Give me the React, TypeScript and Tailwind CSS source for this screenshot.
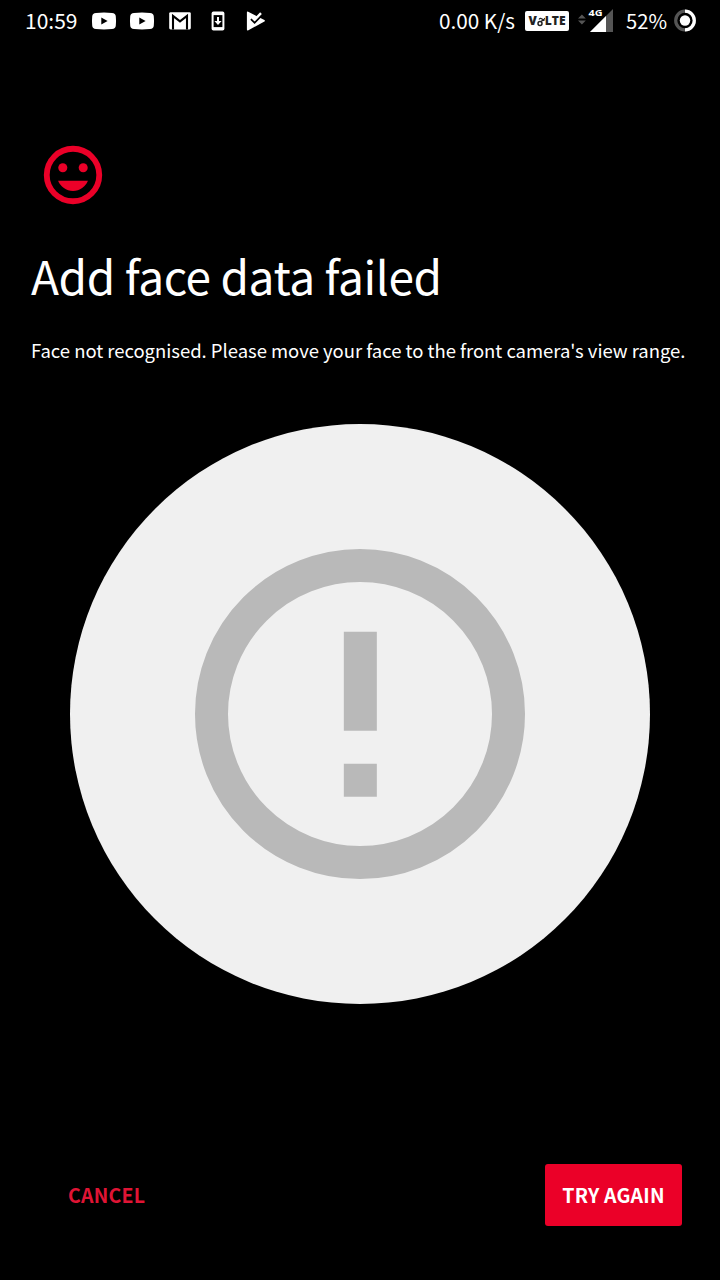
const YoutubeIcon = () => (
  <svg className="h-5 w-6.5" viewBox="0 0 26 20" fill="white">
    <path
      fillRule="evenodd"
      d="M5 2Q13 1.2 21 2Q24.6 2.2 24.8 5.5Q25.3 10 24.8 14.5Q24.6 17.8 21 18Q13 18.8 5 18Q1.4 17.8 1.2 14.5Q.7 10 1.2 5.5Q1.4 2.2 5 2ZM10.3 6.4V13.6L16.6 10Z"
    />
  </svg>
);

const GmailIcon = () => (
  <svg className="h-5 w-6" viewBox="0 0 24 20">
    <rect x="1.2" y="1.2" width="21.6" height="17.3" rx="1.4" fill="white" />
    <path d="M5 18.5V4.8L12 10.3L19 4.8V18.5" fill="none" stroke="black" strokeWidth="2.1" />
  </svg>
);

const UpdateIcon = () => (
  <svg className="h-5 w-4" viewBox="0 0 16 20">
    <rect x="1.6" y=".6" width="12.8" height="19" rx="1.8" fill="white" />
    <rect x="3.6" y="4.1" width="8.8" height="12" fill="black" />
    <path d="M7 6.1H9V10H11.6L8 14L4.4 10H7Z" fill="white" />
  </svg>
);

const PlayCheckIcon = () => (
  <svg className="h-5 w-5" viewBox="0 0 20 20">
    <path d="M.9 1.6Q.9 .1 2.2 .8L18.4 9Q19.5 9.8 18.4 10.6L2.4 19.2Q.9 19.8 .9 18.4Z" fill="white" />
    <path d="M5 8L8.6 11.6L17.4 2.6" fill="none" stroke="black" strokeWidth="2" />
    <path d="M6.2 6.4L8.6 8.8L15 2.2" fill="none" stroke="white" strokeWidth="2.4" />
  </svg>
);

const VolteBadge = () => (
  <div className="flex h-5 w-11 items-center justify-center rounded-[2px] bg-white font-['Open_Sans',sans-serif] text-[12px] leading-none font-extrabold text-[#222]">
    <span>V</span>
    <svg className="h-3 w-2" viewBox="0 0 8 12" fill="none" stroke="#222">
      <circle cx="3" cy="8.5" r="2" strokeWidth="1.5" />
      <path d="M2 4.5Q3 2.5 5 4T8 3M4 6.5Q5.5 5 7.5 5.5" strokeWidth="1.1" />
    </svg>
    <span>LTE</span>
  </div>
);

const SignalIcon = () => (
  <svg className="h-8 w-9" viewBox="0 -4 36 32">
    <path d="M0 9.6L3.9 5.6L7.8 9.6ZM0 11.4L3.9 15.6L7.8 11.4Z" fill="#555" />
    <path d="M35 0V23H12Z" fill="#555" />
    <path d="M28 7V23H12Z" fill="white" />
    <text x="10.6" y="7.2" fontSize="9" fontWeight="700" fill="white" fontFamily="Open Sans, sans-serif" textLength="14" lengthAdjust="spacingAndGlyphs">4G</text>
  </svg>
);

const BatteryIcon = () => (
  <svg className="h-6 w-6" viewBox="0 0 24 24">
    <circle cx="12" cy="11.5" r="9.3" fill="none" stroke="#555" strokeWidth="3.2" />
    <path d="M12 2.2A9.3 9.3 0 0 1 12 20.8" fill="none" stroke="white" strokeWidth="3.2" />
    <circle cx="12" cy="11.5" r="5.2" fill="white" />
  </svg>
);

const StatusBar = () => (
  <div className="flex h-[42px] items-center pl-[25px] pr-[23px] text-[21px]">
    <span className="w-[66px] whitespace-nowrap">10:59</span>
    <div className="flex items-center">
      <YoutubeIcon />
      <div className="w-3" />
      <YoutubeIcon />
      <div className="w-[13px]" />
      <GmailIcon />
      <div className="w-[18px]" />
      <UpdateIcon />
      <div className="w-5" />
      <PlayCheckIcon />
    </div>
    <div className="ml-auto flex items-center">
      <span className="mr-[10px] text-[20.7px] whitespace-nowrap">0.00 K/s</span>
      <VolteBadge />
      <div className="w-[9px]" />
      <SignalIcon />
      <span className="ml-3 mr-[6px] text-[20.2px]">52%</span>
      <BatteryIcon />
    </div>
  </div>
);

export default function App() {
  return (
    <div className="flex h-[1280px] w-[720px] flex-col overflow-hidden bg-black font-['Noto_Sans_CJK_SC',sans-serif] text-white">
      <StatusBar />
      <svg className="mt-[98px] ml-[38px] size-[70px] shrink-0" viewBox="0 0 24 24" fill="#eb0028">
        <circle cx="12" cy="12" r="9" fill="none" stroke="#eb0028" strokeWidth="2" />
        <circle cx="8.5" cy="9.5" r="1.55" />
        <circle cx="15.5" cy="9.5" r="1.55" />
        <path d="M12 17.5c2.33 0 4.31-1.46 5.11-3.5H6.89c.8 2.04 2.78 3.5 5.11 3.5z" />
      </svg>
      <h1 className="mt-[31px] ml-[31px] h-[68px] text-[46px] leading-[68px] tracking-[-0.42px] whitespace-nowrap">
        Add face data failed
      </h1>
      <p className="mt-[27px] ml-[31px] h-[28px] text-[18.5px] leading-[28px] tracking-[-0.03px] whitespace-nowrap">
        Face not recognised. Please move your face to the front camera's view range.
      </p>
      <div className="mx-auto mt-[60px] flex size-[580px] shrink-0 items-center justify-center rounded-full bg-[#f0f0f0]">
        <svg className="size-[396px]" viewBox="0 0 24 24" fill="#b9b9b9">
          <circle cx="12" cy="12" r="9" fill="none" stroke="#b9b9b9" strokeWidth="2" />
          <path d="M11.02 7.02h2v6h-2zM11.02 15.02h2v2h-2z" />
        </svg>
      </div>
      <div className="mt-[160px] flex items-center justify-between pr-[38px] pl-[68px] text-[19.5px] font-bold tracking-[0.2px]">
        <button className="whitespace-nowrap text-[#df1434]">CANCEL</button>
        <button className="h-[62px] w-[137px] rounded-[3px] bg-[#eb0028] whitespace-nowrap">TRY AGAIN</button>
      </div>
    </div>
  );
}
